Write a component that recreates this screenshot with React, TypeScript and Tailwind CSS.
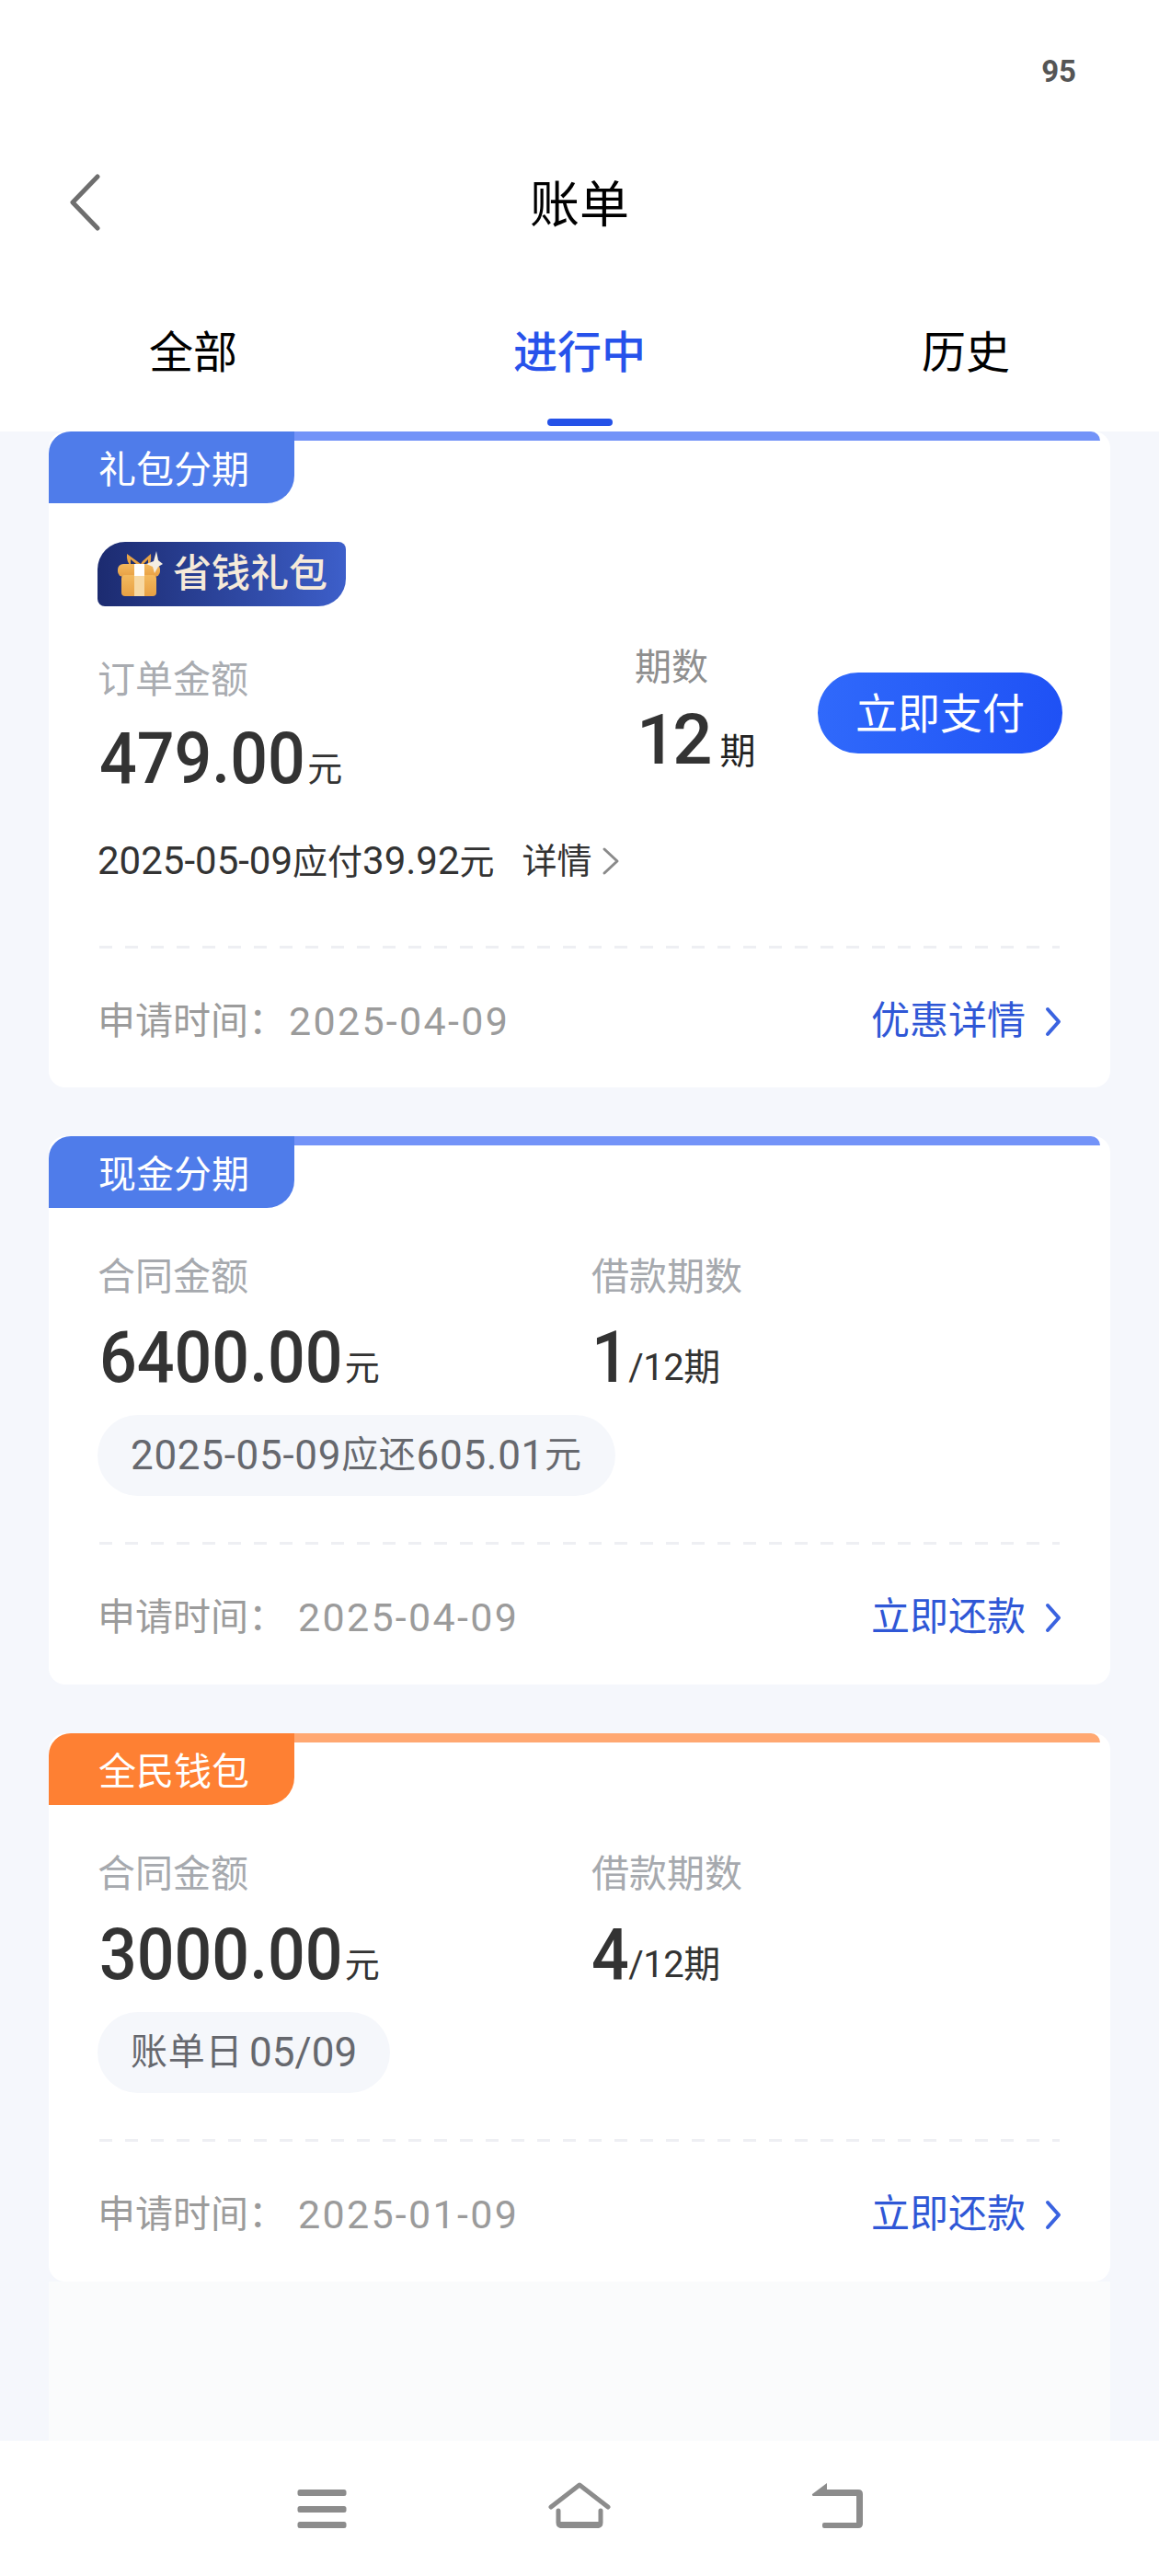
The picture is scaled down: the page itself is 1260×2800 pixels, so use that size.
import React from 'react';

const BLUE_LINK = '#2f57d6';

function Chevron({ color, w, h, stroke }: { color: string; w: number; h: number; stroke: number }) {
  return (
    <svg width={w} height={h} viewBox={`0 0 ${w} ${h}`} fill="none">
      <path
        d={`M${stroke} ${stroke} L${w - stroke} ${h / 2} L${stroke} ${h - stroke}`}
        stroke={color}
        strokeWidth={stroke}
        strokeLinecap="round"
        strokeLinejoin="round"
      />
    </svg>
  );
}

function GiftIcon() {
  return (
    <svg width="50" height="50" viewBox="0 0 50 50" fill="none">
      <defs>
        <linearGradient id="giftBody" x1="0" y1="0" x2="0" y2="1">
          <stop offset="0" stopColor="#f3b95d" />
          <stop offset="1" stopColor="#e8a044" />
        </linearGradient>
      </defs>
      <path d="M11 3 L22 11 L26 14 L16 17 Q10 12 11 3 Z" fill="#e9a445" />
      <path d="M37 3 L28 11 L26 14 L34 17 Q38 12 37 3 Z" fill="#e9a445" />
      <path d="M15 9 L21 14 L15 15 Z" fill="#20306f" />
      <path d="M34 9 L29 14 L34 15 Z" fill="#20306f" />
      <rect x="1" y="14" width="46" height="14" rx="6" fill="url(#giftBody)" />
      <rect x="5" y="26" width="38" height="23" rx="4" fill="url(#giftBody)" />
      <rect x="19" y="14" width="11" height="13" fill="#ffffff" />
      <rect x="19" y="27" width="11" height="22" fill="#f7d9a4" />
      <path d="M43 0 L45 10 L50 14 L45 17 L41 24 L39 17 L32 14 L40 11 Z" fill="#f5eee2" />
    </svg>
  );
}

function BigNumber({ value, squeeze }: { value: string; squeeze: number }) {
  // the reference digits are a narrower face than Roboto, so squeeze them a little
  return (
    <span
      className="inline-block origin-left scale-x-[0.92] text-[78px] font-medium leading-[80px]"
      style={{ marginRight: -squeeze }}
    >
      {value}
    </span>
  );
}

function CardTop({ tag, tagColor, stripColor }: { tag: string; tagColor: string; stripColor: string }) {
  return (
    <div className="flex items-start">
      <div
        className="flex h-[78px] w-[267px] items-center rounded-tl-[24px] rounded-br-[30px] pl-[54px] pt-[6px] text-[41px] leading-[48px] text-white"
        style={{ backgroundColor: tagColor }}
      >
        {tag}
      </div>
      <div className="mr-[11px] h-[10px] flex-1 rounded-tr-[10px]" style={{ backgroundColor: stripColor }} />
    </div>
  );
}

function Dashes() {
  return (
    <div className="ml-[2px] h-[3px] bg-[repeating-linear-gradient(90deg,#eeeff3_0,#eeeff3_14px,transparent_14px,transparent_28px)]" />
  );
}

function CardFooter({ date, gap, action }: { date: string; gap: number; action: string }) {
  return (
    <div className="flex h-[48px] items-center justify-between">
      <span className="flex items-center text-[#9b9b9b]">
        <span className="text-[41px] leading-[48px]">申请时间：</span>
        <span className="text-[43px] leading-[48px] tracking-[2.3px]" style={{ marginLeft: gap }}>
          {date}
        </span>
      </span>
      <span className="mr-[-3px] flex items-center text-[42px] leading-[48px]" style={{ color: BLUE_LINK }}>
        {action}
        <span className="ml-[20px] flex">
          <Chevron color="#3a63e0" w={20} h={35} stroke={4} />
        </span>
      </span>
    </div>
  );
}

function LoanCard(props: {
  tag: string;
  tagColor: string;
  stripColor: string;
  amount: string;
  period: string;
  pill: React.ReactNode;
  date: string;
}) {
  return (
    <div className="rounded-[18px] bg-white">
      <CardTop tag={props.tag} tagColor={props.tagColor} stripColor={props.stripColor} />
      <div className="pl-[53px] pr-[55px] pt-[51px] pb-[49px]">
        <div className="flex">
          <div className="w-[537px]">
            <div className="text-[41px] leading-[48px] text-[#a6a9ae]">合同金额</div>
            <div className="mt-[24px] flex h-[80px] items-end text-[#333333]">
              <span className="pl-[2px]">
                <BigNumber value={props.amount} squeeze={23} />
              </span>
              <span className="mb-[7px] ml-[2px] text-[38px] leading-[44px]">元</span>
            </div>
          </div>
          <div>
            <div className="text-[41px] leading-[48px] text-[#a6a9ae]">借款期数</div>
            <div className="mt-[24px] flex h-[80px] items-end text-[#333333]">
              <BigNumber value={props.period} squeeze={4} />
              <span className="mb-[7px] text-[40px] leading-[44px] tracking-[-0.5px]">/12期</span>
            </div>
          </div>
        </div>
        <div className="mt-[22px] inline-flex h-[88px] items-center rounded-full bg-[#f5f7fb] px-[36px] text-[44px] tracking-[0.7px] text-[#66686e]">
          {props.pill}
        </div>
        <div className="mt-[50px]">
          <Dashes />
        </div>
        <div className="mt-[55px]">
          <CardFooter date={props.date} gap={13} action="立即还款" />
        </div>
      </div>
    </div>
  );
}

export default function App() {
  return (
    <div className="flex h-[2800px] w-[1260px] flex-col overflow-hidden bg-[#f5f7fc] font-['Roboto','Noto_Sans_CJK_SC',sans-serif]">
      {/* header */}
      <div className="h-[469px] shrink-0 bg-white">
        <div className="flex h-[156px] justify-end pt-[58px] pr-[90px]">
          <span className="text-[33px] font-bold leading-[40px] text-[#555555]">95</span>
        </div>
        <div className="relative flex h-[130px] items-center justify-center pt-[6px]">
          <span className="text-[54px] leading-[64px] text-black">账单</span>
          <svg className="absolute left-[74px] top-[33px]" width="36" height="62" viewBox="0 0 36 62" fill="none">
            <path d="M32 3 L5 31 L32 59" stroke="#6e6e6e" strokeWidth="5" strokeLinecap="round" strokeLinejoin="round" />
          </svg>
        </div>
        <div className="grid h-[183px] grid-cols-[420px_420px_420px]">
          <div className="pt-[69px] text-center text-[48px] leading-[58px] text-black">全部</div>
          <div className="flex flex-col items-center pt-[69px]">
            <span className="text-[48px] font-medium leading-[58px] text-[#2752eb]">进行中</span>
            <span className="mt-[42px] h-[8px] w-[71px] rounded-full bg-[#2552e8]" />
          </div>
          <div className="pt-[69px] text-center text-[48px] leading-[58px] text-black">历史</div>
        </div>
      </div>

      {/* bill list */}
      <div className="flex flex-1 flex-col overflow-hidden px-[53px]">
        <div className="rounded-[18px] bg-white">
          <CardTop tag="礼包分期" tagColor="#4f7cea" stripColor="#7393f8" />
          <div className="pl-[53px] pr-[55px] pb-[48px]">
            <div className="mt-[42px] flex h-[70px] w-[270px] items-center rounded-tl-[30px] rounded-tr-[8px] rounded-br-[30px] rounded-bl-[8px] bg-gradient-to-r from-[#1c2b70] to-[#3d5fca] pl-[21px]">
              <GiftIcon />
              <span className="ml-[11px] whitespace-nowrap text-[42px] font-medium leading-[48px] text-[#f6ead9]">省钱礼包</span>
            </div>
            <div className="mt-[41px] flex items-start">
              <div className="w-[584px] shrink-0 pt-[15px]">
                <div className="text-[41px] leading-[48px] text-[#a9acb1]">订单金额</div>
                <div className="mt-[22px] flex h-[80px] items-end text-[#333333]">
                  <span className="pl-[2px]">
                    <BigNumber value="479.00" squeeze={19} />
                  </span>
                  <span className="mb-[7px] ml-[2px] text-[38px] leading-[44px]">元</span>
                </div>
              </div>
              <div className="w-[199px] shrink-0">
                <div className="pt-[2px] text-[40px] leading-[48px] text-[#8f8f8f]">期数</div>
                <div className="mt-[14px] flex h-[80px] items-end pl-[2px]">
                  <span className="text-[76px] font-medium leading-[80px] tracking-[-4px] text-[#333333]">12</span>
                  <span className="mb-[5px] ml-[12px] text-[39px] leading-[44px] text-[#222222]">期</span>
                </div>
              </div>
              <div className="mt-[31px] flex h-[88px] w-[266px] shrink-0 items-center justify-center rounded-full bg-gradient-to-r from-[#3069fb] to-[#1f51f5] pt-[3px] text-[46px] text-white">
                立即支付
              </div>
            </div>
            <div className="mt-[47px] flex h-[48px] items-center text-[#333333]">
              <span className="text-[42px] leading-[48px]">
                2025-05-09<span className="text-[38px]">应付</span>39.92<span className="text-[38px]">元</span>
              </span>
              <span className="ml-[30px] text-[38px] leading-[48px]">详情</span>
              <span className="ml-[10px] flex">
                <Chevron color="#8a8a8a" w={20} h={32} stroke={3} />
              </span>
            </div>
            <div className="mt-[68px]">
              <Dashes />
            </div>
            <div className="mt-[55px]">
              <CardFooter date="2025-04-09" gap={3} action="优惠详情" />
            </div>
          </div>
        </div>

        <div className="mt-[53px]">
          <LoanCard
            tag="现金分期"
            tagColor="#4f7cea"
            stripColor="#7393f8"
            amount="6400.00"
            period="1"
            pill={
              <>
                2025-05-09<span className="text-[40px]">应还</span>605.01<span className="text-[40px]">元</span>
              </>
            }
            date="2025-04-09"
          />
        </div>

        <div className="mt-[53px]">
          <LoanCard
            tag="全民钱包"
            tagColor="#fe8033"
            stripColor="#ffa872"
            amount="3000.00"
            period="4"
            pill={
              <>
                <span className="text-[40px]">账单日</span>
                <span className="ml-[7px] tracking-[0px]">05/09</span>
              </>
            }
            date="2025-01-09"
          />
        </div>

        <div className="flex-1 bg-[#fafbfc]" />
      </div>

      {/* system navigation */}
      <div className="flex h-[147px] shrink-0 items-start justify-center bg-white pt-[45px]">
        <div className="flex w-[280px] justify-center">
          <svg width="54" height="52" viewBox="0 0 54 52" fill="none">
            <rect x="0.5" y="8" width="53" height="7" rx="2.5" fill="#8c8c8c" />
            <rect x="0.5" y="26" width="53" height="7" rx="2.5" fill="#8c8c8c" />
            <rect x="0.5" y="43" width="53" height="7" rx="2.5" fill="#8c8c8c" />
          </svg>
        </div>
        <div className="flex w-[280px] justify-center">
          <svg width="68" height="52" viewBox="0 0 68 52" fill="none">
            <path d="M3 27 L34 3 L65 27" stroke="#8c8c8c" strokeWidth="5" strokeLinecap="round" strokeLinejoin="round" />
            <path d="M11 31 L11 44 Q11 47.5 15 47.5 L53 47.5 Q57 47.5 57 44 L57 31" stroke="#8c8c8c" strokeWidth="5" strokeLinecap="round" fill="none" />
            <path d="M13 43 H55 V50 H13 Z" fill="#8c8c8c" />
          </svg>
        </div>
        <div className="flex w-[280px] justify-center">
          <svg width="58" height="52" viewBox="0 0 58 52" fill="none">
            <path d="M18 1 L2 13 Q1.5 15 4 15 L18 15 H50 V44 H15 Q13 44 13 46 V48 Q13 50 15 50 H52 Q57 50 57 45 V13 Q57 8 52 8 H18 Z" fill="#8c8c8c" />
          </svg>
        </div>
      </div>
    </div>
  );
}
